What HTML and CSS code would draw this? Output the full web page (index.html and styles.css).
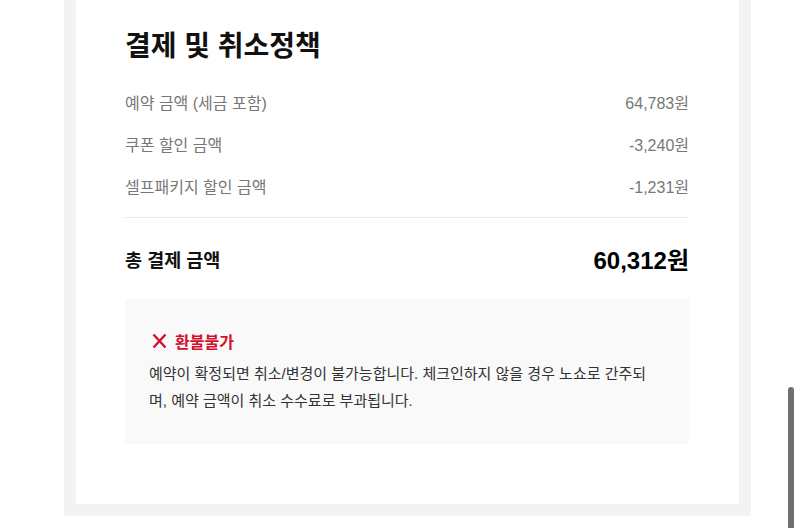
FILE: index.html
```html
<!DOCTYPE html>
<html lang="ko">
<head>
<meta charset="utf-8">
<title>결제 및 취소정책</title>
<link rel="stylesheet" href="styles.css">
</head>
<body>
<div class="frame">
  <section class="card">
    <h2 class="title">결제 및 취소정책</h2>
    <ul class="rows">
      <li class="row"><span class="label">예약 금액 (세금 포함)</span><span class="value">64,783원</span></li>
      <li class="row"><span class="label">쿠폰 할인 금액</span><span class="value">-3,240원</span></li>
      <li class="row"><span class="label">셀프패키지 할인 금액</span><span class="value">-1,231원</span></li>
    </ul>
    <div class="total">
      <span class="total-label">총 결제 금액</span>
      <span class="total-value">60,312원</span>
    </div>
    <div class="notice">
      <div class="notice-head">
        <svg class="x-icon" width="20" height="20" viewBox="0 0 20 20" aria-hidden="true">
          <path d="M4.5 3.5 L16.5 16.5 M16.5 3.5 L4.5 16.5" stroke="#d2102e" stroke-width="2.4" fill="none" stroke-linecap="butt"/>
        </svg>
        <span class="notice-title">환불불가</span>
      </div>
      <p class="notice-text">예약이 확정되면 취소/변경이 불가능합니다. 체크인하지 않을 경우 노쇼로 간주되며, 예약 금액이 취소 수수료로 부과됩니다.</p>
    </div>
  </section>
</div>
<div class="scrollbar"></div>
</body>
</html>
```
FILE: styles.css
```css
html, body {
  margin: 0;
  padding: 0;
  background: #ffffff;
}
body {
  font-family: "Liberation Sans", "Noto Sans CJK KR", sans-serif;
  color: #111;
  overflow: hidden;
  height: 528px;
}
.frame {
  margin-left: 64px;
  width: 663px;
  padding: 0 12px 12px 12px;
  background: #f3f3f3;
}
.card {
  background: #fff;
  padding: 29px 50px 60px 49px;
}
.title {
  margin: 0;
  font-size: 28px;
  line-height: 36px;
  font-weight: 700;
  color: #111;
}
.rows {
  list-style: none;
  margin: 16px 0 0 0;
  padding: 0 0 10px 0;
  border-bottom: 1px solid #e8e8e8;
}
.row {
  height: 42px;
  display: flex;
  align-items: center;
  justify-content: space-between;
}
.label {
  font-size: 16px;
  color: #777;
}
.value {
  font-size: 16px;
  color: #777;
}
.total {
  height: 81px;
  display: flex;
  align-items: center;
  justify-content: space-between;
}
.total-label {
  font-size: 18.5px;
  font-weight: 700;
  color: #111;
}
.total-value {
  font-size: 24px;
  font-weight: 700;
  color: #000;
}
.notice {
  background: #f9f9f9;
  padding: 31px 30px 30px 24px;
}
.notice-head {
  display: flex;
  align-items: center;
  gap: 6px;
  height: 22px;
}
.x-icon {
  display: block;
  flex: none;
}
.notice-title {
  font-size: 16px;
  font-weight: 700;
  color: #d2102e;
}
.notice-text {
  margin: 8px 0 0 0;
  font-size: 15px;
  line-height: 27px;
  color: #333;
  word-break: break-all;
}
.scrollbar {
  position: fixed;
  right: 6px;
  top: 387px;
  bottom: 0;
  width: 6px;
  border-radius: 3px 3px 0 0;
  background: #6f6f6f;
}
```
